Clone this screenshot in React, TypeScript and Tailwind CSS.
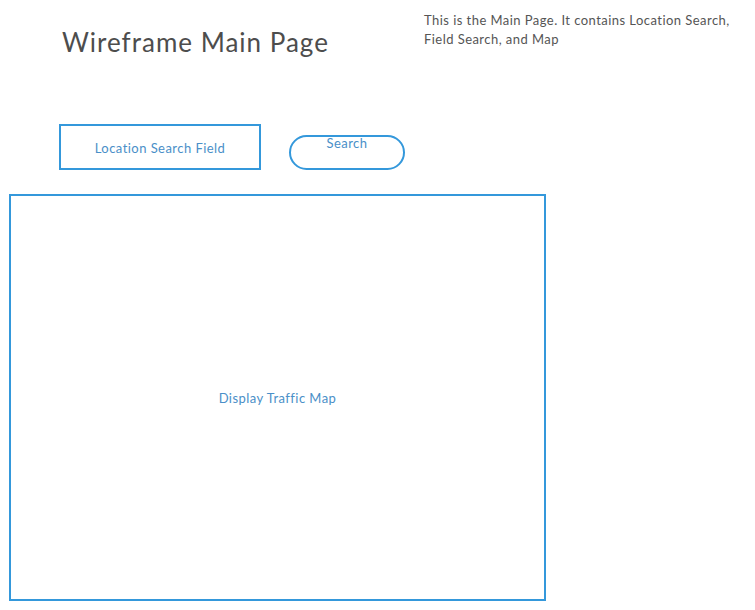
import React from 'react';

export default function App() {
  return (
    <div className="relative w-[755px] h-[610px] bg-white font-['Lato','Liberation_Sans',sans-serif] overflow-hidden">
      {/* header */}
      <div className="flex">
        <h1 className="ml-[62px] mt-[29px] w-[300px] text-[26px] leading-none tracking-[1px] font-normal text-[#4d4d4d]">
          Wireframe Main Page
        </h1>
        <p className="ml-[62px] mt-[11px] w-[331px] text-[13px] leading-[19px] tracking-[0.45px] text-[#555555]">
          This is the Main Page. It contains Location Search, Field Search, and Map
        </p>
      </div>

      {/* search row */}
      <div className="flex items-start mt-[69px] ml-[59px]">
        <div className="w-[202px] h-[46px] border-2 border-[#3498db] flex items-center justify-center pt-[3px] text-[13px] tracking-[0.45px] text-[#4a8fc8]">
          Location Search Field
        </div>
        <button className="ml-[28px] mt-[11px] w-[116px] h-[35px] border-2 border-[#3498db] rounded-full flex justify-center text-[13px] leading-none tracking-[0.45px] text-[#4a8fc8]">
          Search
        </button>
      </div>

      {/* map */}
      <div className="ml-[9px] mt-[24px] w-[537px] h-[407px] border-2 border-[#3498db] flex items-center justify-center pt-[2px] text-[13px] tracking-[0.45px] text-[#4a8fc8]">
        Display Traffic Map
      </div>
    </div>
  );
}
